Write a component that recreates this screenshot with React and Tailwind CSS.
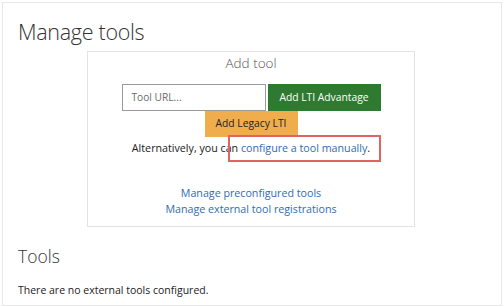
import React from "react";

export default function App() {
  const font = { fontFamily: '"Open Sans", "Noto Sans", sans-serif' };
  return (
    <div className="w-[504px] h-[307px] bg-white p-[2px]" style={font}>
      <div className="h-[304px] w-[500px] border border-[#e8e8e8] pl-[15px] pr-[17px]">
        <h1 className="text-[21.5px] font-light text-[#333] leading-[22px] mt-[18px] tracking-[-0.3px]">Manage tools</h1>
        <div className="relative mx-auto mt-[8px] w-[328px] h-[176px] border border-[#e3e3e3] flex flex-col items-center">
          <div className="mt-[2px] text-[13.5px] font-light text-[#555] leading-[18px]">Add tool</div>
          <div className="mt-[12px] flex gap-[2px]">
            <div className="w-[144px] h-[27px] border border-[#9a9a9a] flex items-center pl-[9px] text-[10.2px] text-[#6b6b6b]">Tool URL...</div>
            <div className="w-[113px] h-[27px] bg-[#2f7a31] text-white text-[10.3px] flex items-center justify-center">Add LTI Advantage</div>
          </div>
          <div className="w-[93px] h-[26px] bg-[#f0ad4e] text-[#222] text-[10.3px] flex items-center justify-center">Add Legacy LTI</div>
          <div className="mt-[2px] text-[10.7px] text-[#222] leading-[18px]">
            Alternatively, you can <span className="text-[#2e6db4]">configure a tool manually</span>.
          </div>
          <div className="mt-[28px] text-[10.7px] text-[#2e6db4] leading-[16px] text-center">
            <div>Manage preconfigured tools</div>
            <div>Manage external tool registrations</div>
          </div>
          <div className="absolute left-[140px] top-[83px] w-[153px] h-[27px] border-2 border-[#e06464]"></div>
        </div>
        <h2 className="mt-[21px] text-[17.5px] font-light text-[#333] leading-none">Tools</h2>
        <p className="mt-[19px] text-[10.5px] text-[#222] leading-none">There are no external tools configured.</p>
      </div>
    </div>
  );
}
